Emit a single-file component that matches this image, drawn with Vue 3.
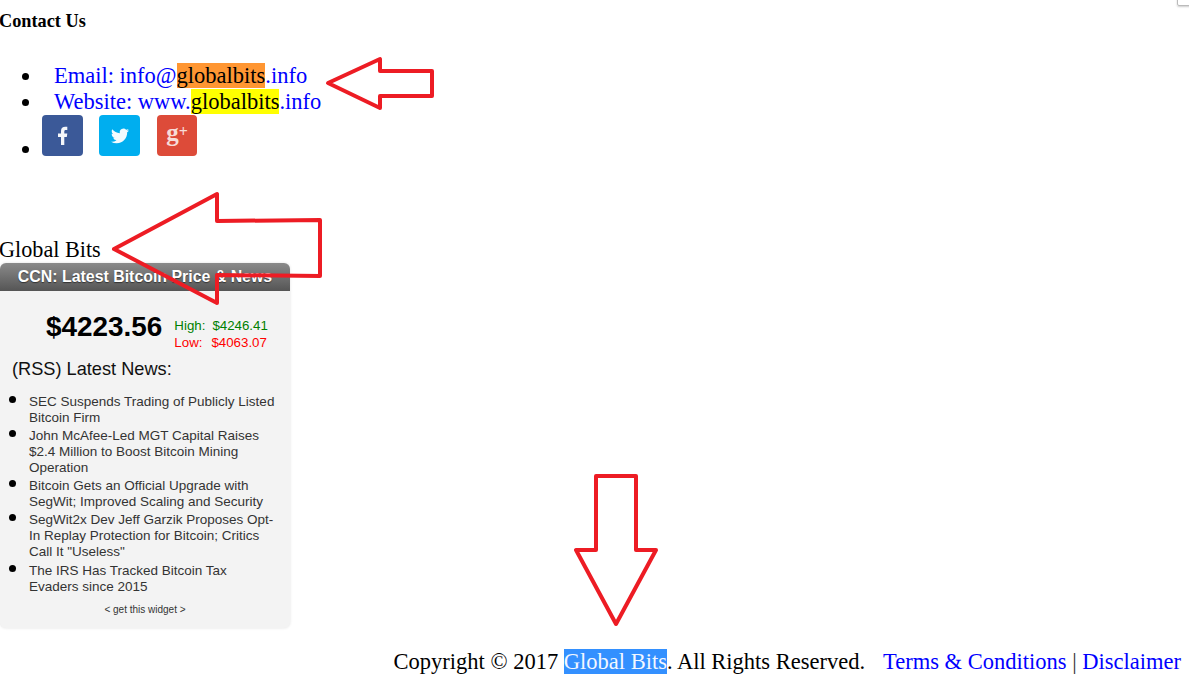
<script setup>
const news = [
  'SEC Suspends Trading of Publicly Listed Bitcoin Firm',
  'John McAfee-Led MGT Capital Raises $2.4 Million to Boost Bitcoin Mining Operation',
  'Bitcoin Gets an Official Upgrade with SegWit; Improved Scaling and Security',
  'SegWit2x Dev Jeff Garzik Proposes Opt-In Replay Protection for Bitcoin; Critics Call It "Useless"',
  'The IRS Has Tracked Bitcoin Tax Evaders since 2015'
]
</script>

<template>
  <div class="page">
    <h4 class="title">Contact Us</h4>
    <ul class="contact">
      <li><a class="link pad">Email: info@<span class="hit-current">globalbits</span>.info</a></li>
      <li><a class="link pad">Website: www.<span class="hit">globalbits</span>.info</a></li>
      <li class="social-row">
        <div class="social">
          <a class="icon fb">
            <svg viewBox="0 0 41 41" width="41" height="41"><path fill="#f4f6fa" d="M19 30V22h-3v-3.600h3v-2.400c0-3 1.700-4.300 4.200-4.300 1.100 0 1.800.1 2.100.1v3.100h-1.500c-1.200 0-1.500.6-1.500 1.500v2h3l-.5 3.600h-2.500v8z"/></svg>
          </a>
          <a class="icon tw">
            <svg viewBox="0 0 24 24" width="18" height="18"><path fill="#f4fbfe" d="M23.953 4.57a10 10 0 01-2.825.775 4.958 4.958 0 002.163-2.723c-.951.555-2.005.959-3.127 1.184a4.92 4.92 0 00-8.384 4.482C7.69 8.095 4.067 6.13 1.64 3.162a4.822 4.822 0 00-.666 2.475c0 1.71.87 3.213 2.188 4.096a4.904 4.904 0 01-2.228-.616v.06a4.923 4.923 0 003.946 4.827 4.996 4.996 0 01-2.212.085 4.936 4.936 0 004.604 3.417 9.867 9.867 0 01-6.102 2.105c-.39 0-.779-.023-1.17-.067a13.995 13.995 0 007.557 2.209c9.053 0 13.998-7.496 13.998-13.985 0-.21 0-.42-.015-.63A9.935 9.935 0 0024 4.59z"/></svg>
          </a>
          <a class="icon gp"><span class="g">g</span><span class="plus">+</span></a>
        </div>
      </li>
    </ul>

    <div class="brand">Global Bits</div>

    <section class="widget">
      <header class="widget-head">CCN: Latest Bitcoin Price &amp; News</header>
      <div class="price-row">
        <div class="price">$4223.56</div>
        <div class="range">
          <div class="high"><span>High:</span><span>$4246.41</span></div>
          <div class="low"><span>Low:</span><span>$4063.07</span></div>
        </div>
      </div>
      <h3 class="news-title">(RSS) Latest News:</h3>
      <ul class="news">
        <li v-for="item in news" :key="item">{{ item }}</li>
      </ul>
      <div class="get">&lt; get this widget &gt;</div>
    </section>

    <footer class="footer">
      <span>Copyright © 2017 <span class="selected">Global Bits</span>. All Rights Reserved.</span>
      <span class="links"><a class="link">Terms &amp; Conditions</a> <span class="sep">|</span> <a class="link">Disclaimer</a></span>
    </footer>

    <svg class="arrows" width="1189" height="685" viewBox="0 0 1189 685">
      <g fill="none" stroke="#ed1c24" stroke-width="4" stroke-linejoin="round">
        <polygon points="328,83 380,59 380,71 432,71 432,96 380,96 380,108" />
        <polygon points="114,249 217,194 217,221 320,220 320,276 217,275 217,303" />
        <polygon points="596,476 636,476 636,550 656,550 616,624 576,550 596,550" />
      </g>
    </svg>
    <div class="corner"></div>
  </div>
</template>

<style>
html, body { margin: 0; background: #fff; overflow: hidden; }
</style>

<style scoped>
.page {
  position: relative;
  width: 1189px;
  height: 685px;
  overflow: hidden;
  font-family: "Liberation Serif", "Times New Roman", serif;
  color: #000;
}
.title {
  margin: 0;
  padding-top: 12px;
  font-size: 18.3px;
  line-height: 18px;
  font-weight: bold;
  transform: translateX(-1px);
}
.contact {
  margin: 33px 0 0;
  padding: 0 0 0 42px;
  font-size: 22.5px;
  line-height: 26px;
  list-style: none;
}
.contact li { position: relative; }
.contact li::before {
  content: "";
  position: absolute;
  left: -20px;
  top: 10px;
  width: 7px;
  height: 7px;
  border-radius: 50%;
  background: #000;
}
.contact li.social-row::before { top: 31px; }
.link { color: #0000ff; }
.pad { margin-left: 12px; }
.hit-current { background: #ff9632; color: #000; }
.hit { background: #ffff00; color: #000; }
.social-row { height: 46px; }
.social { display: flex; }
.icon {
  width: 41px;
  height: 41px;
  margin-right: 16px;
  border-radius: 4px;
  display: flex;
  align-items: center;
  justify-content: center;
}
.fb { background: #3b5998; }
.tw { background: #00aeef; }
.gp {
  background: #dd4b39;
  width: 40px;
  margin-left: 1px;
  color: #f7dcd8;
  line-height: 1;
}
.g { font-size: 25px; font-weight: bold; transform: translateY(-3px); }
.plus { font-size: 16px; font-weight: bold; transform: translateY(-4px); }
.brand {
  margin-top: 76px;
  font-size: 22.2px;
  line-height: 26px;
  transform: translateX(-1px);
}
.widget {
  width: 290px;
  height: 365px;
  background: #f3f3f3;
  border-radius: 6px;
  box-shadow: 0 0 3px rgba(0, 0, 0, .12);
  font-family: "Liberation Sans", Arial, sans-serif;
  overflow: hidden;
}
.widget-head {
  height: 28px;
  line-height: 27px;
  text-align: center;
  font-weight: bold;
  font-size: 15.9px;
  color: #fff;
  background: linear-gradient(#8a8a8a, #555);
  text-shadow: 0 1px 1px rgba(0, 0, 0, .5);
}
.price-row {
  display: flex;
  padding: 19px 0 0 46px;
  gap: 12px;
}
.price {
  font-size: 27.9px;
  line-height: 33px;
  font-weight: bold;
}
.range { font-size: 13.3px; line-height: 17px; padding-top: 7px; }
.high { color: #008000; display: flex; gap: 7px; }
.low { color: #ff0000; display: flex; gap: 9px; }
.news-title {
  margin: 8px 0 0 12px;
  font-size: 18.2px;
  line-height: 20px;
  font-weight: normal;
  color: #111;
}
.news {
  margin: 15px 0 0;
  padding: 0 12px 0 29px;
  font-size: 13.5px;
  line-height: 16px;
  color: #333;
  list-style: none;
}
.news li { margin-bottom: 2px; position: relative; }
.news li:last-child { margin-top: 3px; }
.news li::before {
  content: "";
  position: absolute;
  left: -20px;
  top: 2px;
  width: 7px;
  height: 7px;
  border-radius: 50%;
  background: #000;
}
.get {
  margin-top: 9px;
  text-align: center;
  font-size: 10px;
  line-height: 12px;
  color: #333;
}
.footer {
  display: flex;
  justify-content: flex-end;
  gap: 18px;
  margin-top: 21px;
  padding-right: 8px;
  font-size: 22.5px;
  line-height: 26px;
  white-space: nowrap;
}
.selected { background: #3390ff; color: #f2f7ff; }
.sep { color: #333; font-weight: 300; }
.arrows { position: absolute; left: 0; top: 0; pointer-events: none; }
.corner {
  position: absolute;
  right: -6px;
  top: -6px;
  width: 16px;
  height: 10px;
  border: 1px solid #bbb;
  border-radius: 2px;
  box-shadow: 0 1px 2px rgba(0,0,0,.2);
}
</style>
